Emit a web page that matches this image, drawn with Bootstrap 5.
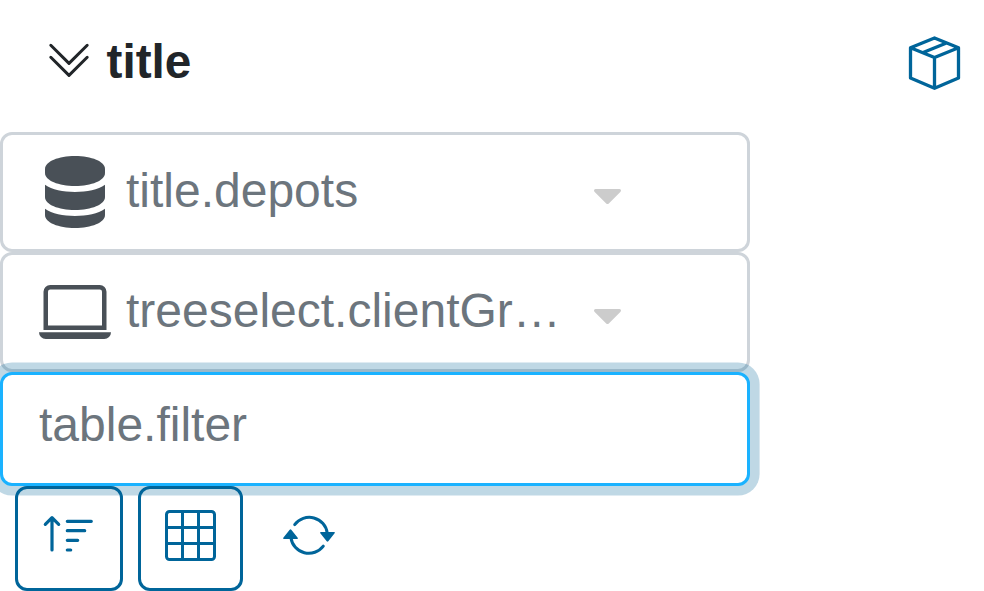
<!DOCTYPE html>
<html lang="en">
<head>
<meta charset="utf-8">
<meta name="viewport" content="width=device-width, initial-scale=1">
<title>title</title>
<link href="https://cdn.jsdelivr.net/npm/bootstrap@5.3.0/dist/css/bootstrap.min.css" rel="stylesheet">
<style>
  body { font-family: "Liberation Sans", Arial, sans-serif; font-size: 48px; line-height: 72px; color: #212529; background: #fff; }
  svg { display: block; flex: none; overflow: visible; }
  .panel-head { height: 132px; padding: 25px 24px 35px 49px; }
  .panel-name { font-size: 47.7px; line-height: 72px; margin: 2px 0 0 17.500px; }
  .fields { width: 750px; }
  .tree-select { height: 120px; border: 3px solid #ced4da; border-radius: 12px; padding: 0 126px 0 36px; color: #6c757d; }
  .tree-select > svg { color: #495057; margin-right: 15px; }
  .tree-select .label-text { margin-top: -3px; }
  .tree-select .arrow { color: #ccc; margin: 9px 0 0 auto; }
  .form-control.filter-input, .form-control.filter-input:focus { height: 114px; border: 3px solid #1ab2ff; border-radius: 12px; padding: 13px 36px 23px; font-size: 48px; line-height: 72px; box-shadow: 0 0 0 9.6px rgba(0,99,151,.25); color: #212529; }
  .form-control.filter-input::placeholder { color: #6c757d; opacity: 1; }
  .tools { gap: 15px; padding-left: 15px; }
  .btn.tool { --bs-btn-color: #00659a; --bs-btn-border-color: #00659a; width: 105px; height: 105px; padding: 0 0 6px; border-width: 3px; border-radius: 12px; }
  .btn.tool-sort { width: 108px; padding-bottom: 9px; }
  .btn.tool-plain { border-color: transparent; padding: 0; }
  .brand { color: #00659a; margin-top: 4px; }
</style>
</head>
<body class="overflow-hidden">
<header class="panel-head d-flex align-items-center justify-content-between">
  <div class="d-flex align-items-center">
    <svg width="40" height="36" viewBox="0 0 40 36" fill="none" stroke="currentColor" stroke-width="3" stroke-linecap="round" stroke-linejoin="round"><path d="M1.800 2.300 20 20.400 38.200 2.300M1.800 14.300 20 32.400 38.200 14.300"/></svg>
    <h1 class="panel-name fw-bold">title</h1>
  </div>
  <svg class="brand" width="51" height="54" viewBox="0 0 51 54" fill="none" stroke="currentColor" stroke-width="3.300" stroke-linejoin="round"><path d="M25.500 2 49.500 11.700V42L25.500 52.300 1.500 42V11.700ZM1.500 11.700 25.500 21.500 49.500 11.700M25.500 21.500V52M13.500 16.700 37.500 7"/></svg>
</header>
<main>
  <div class="fields">
    <div class="tree-select d-flex align-items-center">
      <svg width="72" height="72" viewBox="0 0 72 72" fill="currentColor"><path d="M6 13C6 5.500 19.500 0 36 0S66 5.500 66 13V17C66 24.500 52.500 30 36 30S6 24.500 6 17Z"/><path d="M6 28.800C13 33.600 24 36 36 36S59 33.600 66 28.800V41C66 48.500 52.500 54 36 54S6 48.500 6 41Z"/><path d="M6 52.800C13 57.600 24 60 36 60S59 57.600 66 52.800V59C66 66.500 52.500 72 36 72S6 66.500 6 59Z"/></svg>
      <span class="label-text">title.depots</span>
      <svg class="arrow" width="27" height="15" viewBox="0 0 27 15" fill="currentColor"><path d="M1.500 0H25.500Q27 0 27 1.500 27 2.200 26.300 2.900L14.800 14.400Q13.500 15.600 12.200 14.400L.7 2.900Q0 2.200 0 1.500 0 0 1.500 0Z"/></svg>
    </div>
    <div class="tree-select d-flex align-items-center">
      <svg width="72" height="72" viewBox="0 0 16 16" fill="currentColor"><path d="M13.500 3a.5.5 0 0 1 .5.5V11H2V3.500a.5.5 0 0 1 .5-.5h11zm-11-1A1.500 1.500 0 0 0 1 3.500V12h14V3.500A1.500 1.500 0 0 0 13.500 2h-11zM0 12.500h16a1.500 1.500 0 0 1-1.500 1.500h-13A1.500 1.500 0 0 1 0 12.500z"/></svg>
      <span class="label-text text-nowrap">treeselect.clientGr…</span>
      <svg class="arrow" width="27" height="15" viewBox="0 0 27 15" fill="currentColor"><path d="M1.500 0H25.500Q27 0 27 1.500 27 2.200 26.300 2.900L14.800 14.400Q13.500 15.600 12.200 14.400L.7 2.900Q0 2.200 0 1.500 0 0 1.500 0Z"/></svg>
    </div>
    <input class="form-control filter-input" type="text" placeholder="table.filter" aria-label="table.filter">
  </div>
  <div class="tools d-flex">
    <button class="btn tool tool-sort d-flex align-items-center justify-content-center" type="button" aria-label="Sort">
      <svg width="50" height="38" viewBox="44 515 50 38" fill="none" stroke="currentColor" stroke-width="3.200" stroke-linecap="round" stroke-linejoin="round"><path d="M52 518V550M45.300 524.300 52 517.600 58.700 524.300M67.300 521.300H91.300M67.300 530.700H84.700M67.300 540.300H77.700M67.300 550H70.700"/></svg>
    </button>
    <button class="btn tool d-flex align-items-center justify-content-center" type="button" aria-label="Columns">
      <svg width="51" height="51" viewBox="0 0 51 51" fill="none" stroke="currentColor" stroke-width="3"><rect x="1.500" y="1.500" width="48" height="48" rx="3"/><path d="M17.500 1.500V49.500M33.500 1.500V49.500M1.500 17.500H49.500M1.500 33.500H49.500"/></svg>
    </button>
    <button class="btn tool tool-plain d-flex align-items-center justify-content-center" type="button" aria-label="Refresh">
      <svg width="52" height="40" viewBox="285 519 52 40" fill="none" stroke="currentColor" stroke-width="3" stroke-linecap="round"><path d="M294.700 524.600A18 17.500 0 0 1 327.200 533M323.300 546.200A18 17.500 0 0 1 291 538"/><path stroke="none" fill="currentColor" d="M320.700 532H334.300Q335.400 532.300 334.600 533.300L328.300 541.300Q327.500 542 326.700 541.300L320.300 533.300Q319.700 532.300 320.700 532ZM283.800 539H297.300Q298.400 538.700 297.700 537.700L291.300 529.700Q290.500 529 289.700 529.700L283.300 537.700Q282.600 538.700 283.800 539Z"/></svg>
    </button>
  </div>
</main>
<script src="https://cdn.jsdelivr.net/npm/bootstrap@5.3.0/dist/js/bootstrap.bundle.min.js"></script>
</body>
</html>
